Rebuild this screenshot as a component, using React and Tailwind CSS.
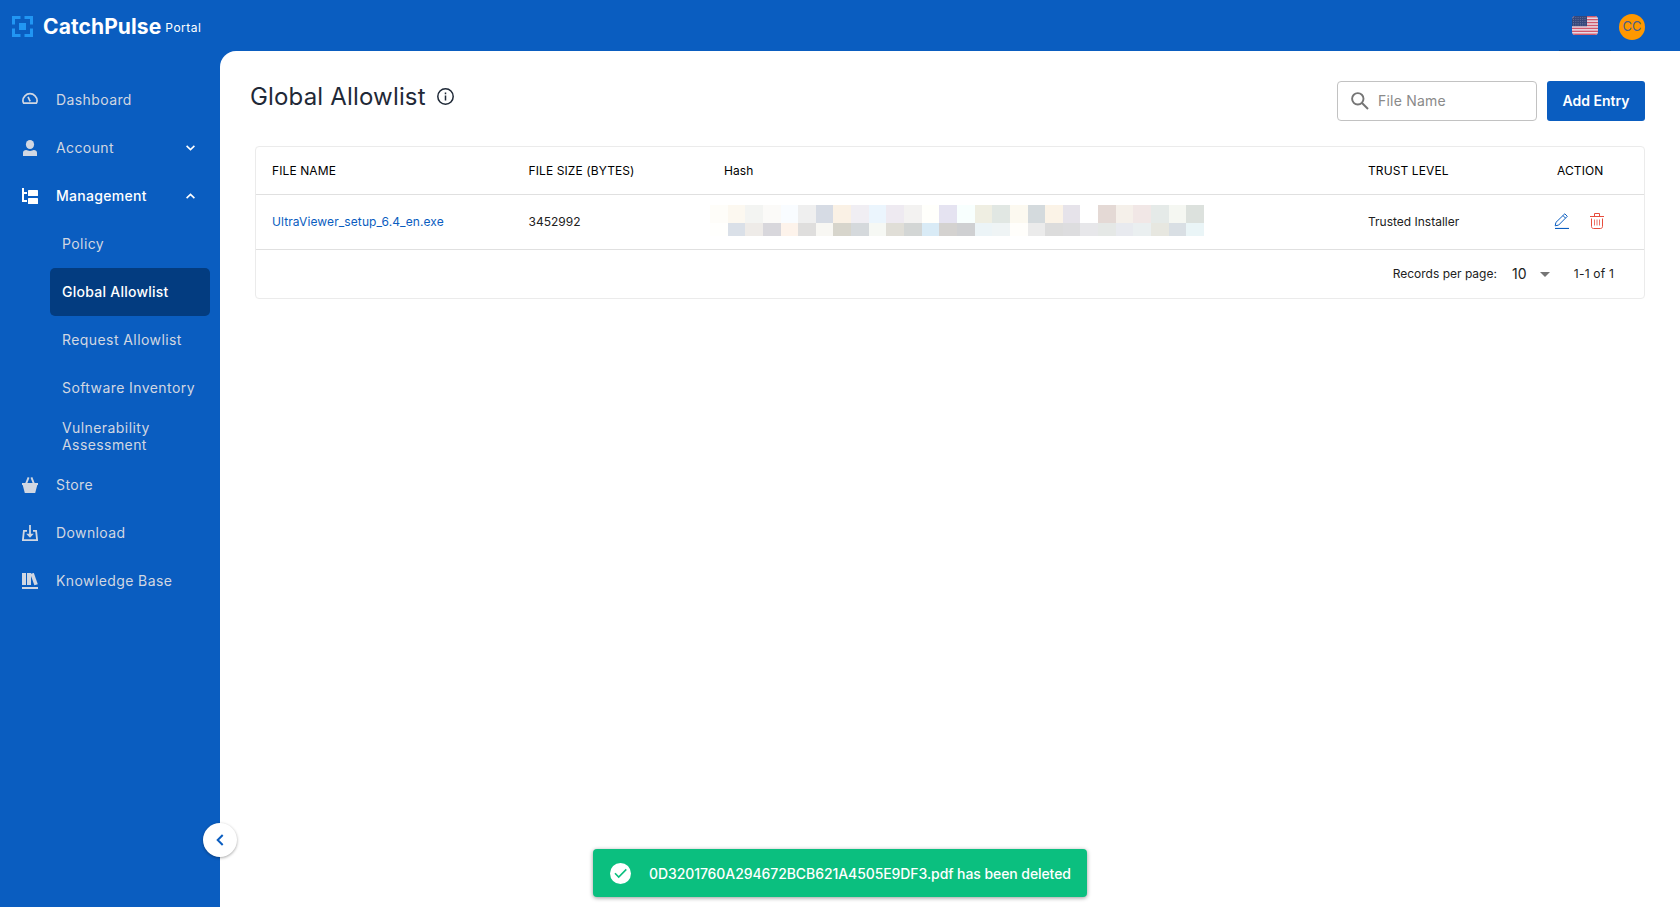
import { useState } from "react";

const TOP_CELLS = [
  "#fefdf9", "#fcf8f0", "#f3f4f2", "#fbfaf8", "#f9fcff", "#efefef", "#d6dbe4", "#faf1e5", "#f0eef3", "#ebf5fd",
  "#eeeaf1", "#f3f2f1", "#fffffb", "#e5e3f1", "#f8fffe", "#efeee2", "#e1e7e3", "#fcf9f0", "#d4dadd", "#fbf3e7",
  "#e6e3ea", "#ffffff", "#e4d9d5", "#f5f0ea", "#f1e7e6", "#e5eae8", "#f5f7f2", "#dce1dd",
];
const BOTTOM_CELLS = [
  "#fffffd", "#dae0e8", "#eeebe8", "#d8d7dc", "#fdf3eb", "#dfdedd", "#f8f7f3", "#d7d5cc", "#d5d9dc", "#f6f8f4",
  "#e0ded7", "#d3d6d5", "#d9ebf6", "#d4d2d0", "#cfd0d2", "#ecf4f7", "#eff4f5", "#fffefb", "#ebebeb", "#dcdcdc",
  "#dddddf", "#e7e7ea", "#e5e8e6", "#e8eaef", "#eaeff0", "#e7e7e0", "#d9dfe4", "#eaf5f7",
];

const ICONS = {
  dashboard: (
    <path
      d="M1.7 11.2C1.1 10.4.9 9.6.9 8.8a7.1 7.1 0 0 1 14.2 0c0 .8-.2 1.6-.8 2.4ZM6 4.8l2.2 4.6"
      fill="none"
      stroke="currentColor"
      strokeWidth="1.7"
    />
  ),
  account: (
    <>
      <ellipse cx="8" cy="4.5" rx="4.1" ry="4.5" />
      <path d="M1 16v-3.2C1 11 2.4 10 4.2 10c1.2 0 2 .9 3.8.9s2.6-.9 3.8-.9C13.6 10 15 11 15 12.8V16Z" />
    </>
  ),
  management: (
    <>
      <path d="M0 0h2v4h3v2H2v6h3v2H0Z" />
      <rect x="6" y="2" width="10" height="6" rx="0.6" />
      <rect x="6" y="10" width="10" height="6" rx="0.6" />
    </>
  ),
  store: (
    <>
      <path d="M0 6h16v2h-.7L13.2 16H2.8L.7 8H0Z" />
      <path d="M4 6.8 6.6.4M12 6.8 9.4.4" stroke="currentColor" strokeWidth="1.9" />
    </>
  ),
  download: (
    <>
      <path d="M5 5.9H1.9L.9 15.1h14.2l-1-9.2H11M8 0v9.5" fill="none" stroke="currentColor" strokeWidth="1.8" />
      <path d="M4.2 8.8h7.6L8 12.8Z" />
    </>
  ),
  knowledge: (
    <>
      <path d="M0 0h4v12H0ZM5 0h4v12H5Z" />
      <path d="m8.3.9 3.5-1 4 11.4-3.4 1Z" />
      <path d="M0 14h16v2H0Z" />
    </>
  ),
};

function NavIcon({ name }) {
  return (
    <svg className="size-4 shrink-0" viewBox="0 0 16 16" fill="currentColor">
      {ICONS[name]}
    </svg>
  );
}

function Caret({ up }) {
  return (
    <svg className="ml-auto h-[6px] w-[9px] text-white" viewBox="0 0 9 6" fill="none" stroke="currentColor" strokeWidth="1.6">
      <path d={up ? "M.6 5.1 4.5 1.4l3.9 3.7" : "M.6.9l3.9 3.7L8.4.9"} />
    </svg>
  );
}

function NavItem({ icon, label, active, caret, onClick }) {
  return (
    <button
      onClick={onClick}
      className={`flex h-12 w-full items-center gap-[18px] pl-[22px] pr-[25px] text-left text-[14px] ${
        active ? "font-medium tracking-[0.3px] text-white" : "tracking-[0.4px] text-[#d1d7e2]"
      }`}
    >
      <NavIcon name={icon} />
      <span className="pb-[2px]">{label}</span>
      {caret && <Caret up={caret === "up"} />}
    </button>
  );
}

function SubItem({ label, active }) {
  return (
    <a
      className={`ml-[50px] mr-[10px] flex items-center rounded-[5px] pb-px pl-3 text-[14px] leading-[17px] ${
        active ? "bg-[#033c80] font-medium tracking-[0.25px] text-white" : "tracking-[0.42px] text-[#d1d7e2]"
      } ${label.startsWith("Vulnerability") ? "h-[49px] pr-8" : "h-12"}`}
    >
      {label}
    </a>
  );
}

function Flag() {
  return (
    <svg className="h-[19px] w-[26px]" viewBox="0 0 26 19">
      <clipPath id="flag">
        <rect width="26" height="19" rx="3.5" />
      </clipPath>
      <g clipPath="url(#flag)">
        <rect width="26" height="19" fill="#e9e4ee" />
        {[0, 1, 2, 3, 4, 5, 6].map((i) => (
          <rect key={i} y={i * 2.92} width="26" height="1.46" fill="#d0576b" />
        ))}
        <rect width="15" height="10.2" fill="#35477a" />
        {[1.5, 3.5, 5.5, 7.5, 9].map((y) => (
          <path key={y} d={`M1 ${y}h13`} stroke="#7280a5" strokeWidth="0.7" strokeDasharray="1 1.3" />
        ))}
      </g>
    </svg>
  );
}

function Header() {
  return (
    <header className="flex h-[51px] items-center bg-[#0a5dc0] pl-3 pr-[35px]">
      <svg className="mt-[2px] size-[21px]" viewBox="0 0 21 21" fill="none">
        <path
          d="M1.5 8.5v-7h7M12.5 1.5h7v7M19.5 12.5v7h-7M8.5 19.5h-7v-7"
          stroke="#2196f3"
          strokeWidth="3"
        />
        <rect x="7" y="7" width="7" height="7" fill="#2196f3" />
      </svg>
      <div className="ml-[10px] flex items-center gap-1 text-white">
        <span className="pt-[2px] text-[21px] font-bold tracking-[0.1px]">CatchPulse</span>
        <span className="pt-[4px] text-[12px] tracking-[0.5px]">Portal</span>
      </div>
      <div className="ml-auto flex h-full items-center">
        <div className="flex h-full w-[52px] items-center justify-center border-b border-[#084a9a]">
          <Flag />
        </div>
        <div className="ml-2 mt-[3px] flex size-[26px] items-center justify-center rounded-full bg-[#ff9800] pb-px text-[13px] text-[#4a5f8a]">
          CC
        </div>
      </div>
    </header>
  );
}

function Sidebar() {
  const [open, setOpen] = useState(true);

  return (
    <nav className="w-[220px] shrink-0 pt-[25px]">
      <NavItem icon="dashboard" label="Dashboard" />
      <NavItem icon="account" label="Account" caret="down" />
      <NavItem icon="management" label="Management" active caret={open ? "up" : "down"} onClick={() => setOpen(!open)} />
      {open && (
        <div>
          <SubItem label="Policy" />
          <SubItem label="Global Allowlist" active />
          <SubItem label="Request Allowlist" />
          <SubItem label="Software Inventory" />
          <SubItem label="Vulnerability Assessment" />
        </div>
      )}
      <NavItem icon="store" label="Store" />
      <NavItem icon="download" label="Download" />
      <NavItem icon="knowledge" label="Knowledge Base" />
    </nav>
  );
}

function HashCells() {
  return (
    <div className="-ml-[14px] w-[494px] pb-[3px]">
      <div className="flex h-[18px]">
        {TOP_CELLS.map((c, i) => (
          <span key={i} className="flex-1" style={{ backgroundColor: c }} />
        ))}
      </div>
      <div className="flex h-[13px]">
        {BOTTOM_CELLS.map((c, i) => (
          <span key={i} className="flex-1" style={{ backgroundColor: c }} />
        ))}
      </div>
    </div>
  );
}

function AllowlistTable() {
  return (
    <div className="ml-[5px] mt-[25px] rounded-[4px] border border-[#ebebeb] text-[12px] text-[#212121]">
      <div className="grid h-12 grid-cols-[256.5px_195.5px_644px_189px_1fr] items-center border-b border-[#e0e0e0] pl-4 tracking-[0.1px] text-black">
        <span>FILE NAME</span>
        <span>FILE SIZE (BYTES)</span>
        <span>Hash</span>
        <span>TRUST LEVEL</span>
        <span>ACTION</span>
      </div>
      <div className="grid h-[55px] grid-cols-[256.5px_195.5px_644px_189px_1fr] items-center border-b border-[#e0e0e0] pl-4">
        <a className="tracking-[0.1px] text-[#0a5dc0]">UltraViewer_setup_6.4_en.exe</a>
        <span>3452992</span>
        <HashCells />
        <span>Trusted Installer</span>
        <div className="-ml-[3px] flex gap-[19px] pb-[2px]">
          <svg className="size-4" viewBox="0 0 16 16" fill="none" stroke="#0a5dc0">
            <path d="M1 15.5h14" strokeWidth="1.2" />
            <path d="m1.2 12.8.7-3.4L10.8.8l2.5 2.5-8.7 8.8ZM9 2.6l2.5 2.5" strokeWidth="1" />
          </svg>
          <svg className="size-4" viewBox="0 0 16 16" fill="none" stroke="#e74c3c">
            <path d="M1 3.5h14M5.5 3.5v-3h5v3M2.5 5.5v8c0 1.2.8 2 2 2h7c1.2 0 2-.8 2-2v-8" />
            <path d="M5.5 6.5v6M8 6.5v6M10.5 6.5v6" strokeWidth="0.8" />
          </svg>
        </div>
      </div>
      <div className="flex h-12 items-center justify-end pr-[30px]">
        <span>Records per page:</span>
        <span className="ml-[15px] pb-px text-[14px] tracking-[0.2px]">10</span>
        <svg className="ml-[13px] h-[5px] w-[10px]" viewBox="0 0 10 5" fill="#757575">
          <path d="M0 0h10L5 5Z" />
        </svg>
        <span className="ml-[24px] tracking-[0.2px]">1-1 of 1</span>
      </div>
    </div>
  );
}

export default function App() {
  const [search, setSearch] = useState("");

  return (
    <div className="relative flex h-[907px] w-full flex-col overflow-hidden bg-[#0a5dc0] font-['Inter',sans-serif]">
      <Header />
      <div className="flex flex-1">
        <Sidebar />
        <main className="flex-1 rounded-tl-[16px] bg-white pl-[30px] pr-[35px] pt-[30px]">
          <div className="flex h-10">
            <h1 className="text-[24px] leading-8 tracking-[0.17px] text-[#1f2937]">Global Allowlist</h1>
            <svg className="ml-[11px] mt-[7px] size-[17px]" viewBox="0 0 17 17" fill="none" stroke="#1f2937" strokeWidth="1.5">
              <circle cx="8.5" cy="8.5" r="7.7" />
              <path d="M8.5 7.5v5M8.5 4.5v1.7" />
            </svg>
            <label className="ml-auto flex h-10 w-[200px] items-center rounded-[4px] border border-[#c2c2c2] pl-[13px]">
              <svg className="size-[18px] shrink-0" viewBox="0 0 18 18" fill="none" stroke="#757575" strokeWidth="1.9">
                <circle cx="6.8" cy="6.8" r="5.7" />
                <path d="m11 11 6 6" />
              </svg>
              <input
                value={search}
                onChange={(e) => setSearch(e.target.value)}
                placeholder="File Name"
                className="ml-[9px] w-[130px] pb-[2px] text-[14px] tracking-[0.2px] outline-none placeholder:text-[#8a8a8a]"
              />
            </label>
            <button className="ml-[10px] h-10 w-[98px] rounded-[3px] bg-[#0a5dc0] pb-px text-[14px] font-semibold text-white">
              Add Entry
            </button>
          </div>
          <AllowlistTable />
        </main>
      </div>

      <button className="absolute left-[203px] top-[823px] flex size-[34px] items-center justify-center rounded-full bg-white shadow-[0_1px_3px_rgba(0,0,0,0.35)]">
        <svg className="h-3 w-2" viewBox="0 0 8 12" fill="none" stroke="#0a5dc0" strokeWidth="2">
          <path d="M6.7 1 1.7 6l5 5" />
        </svg>
      </button>

      <div className="absolute left-[593px] top-[849px] flex h-12 w-[494px] items-center rounded-[4px] bg-[#0bbf7f] pl-[17px] text-white shadow-[0_1px_4px_rgba(0,0,0,0.4)]">
        <svg className="size-[21px]" viewBox="0 0 21 21">
          <circle cx="10.5" cy="10.5" r="10.5" fill="#fff" />
          <path d="m5 10.3 3.7 3.7 7.6-7.6" fill="none" stroke="#0bbf7f" strokeWidth="1.6" />
        </svg>
        <span className="ml-[18px] whitespace-nowrap text-[14px] font-medium tracking-[-0.08px]">
          0D3201760A294672BCB621A4505E9DF3.pdf has been deleted
        </span>
      </div>
    </div>
  );
}
